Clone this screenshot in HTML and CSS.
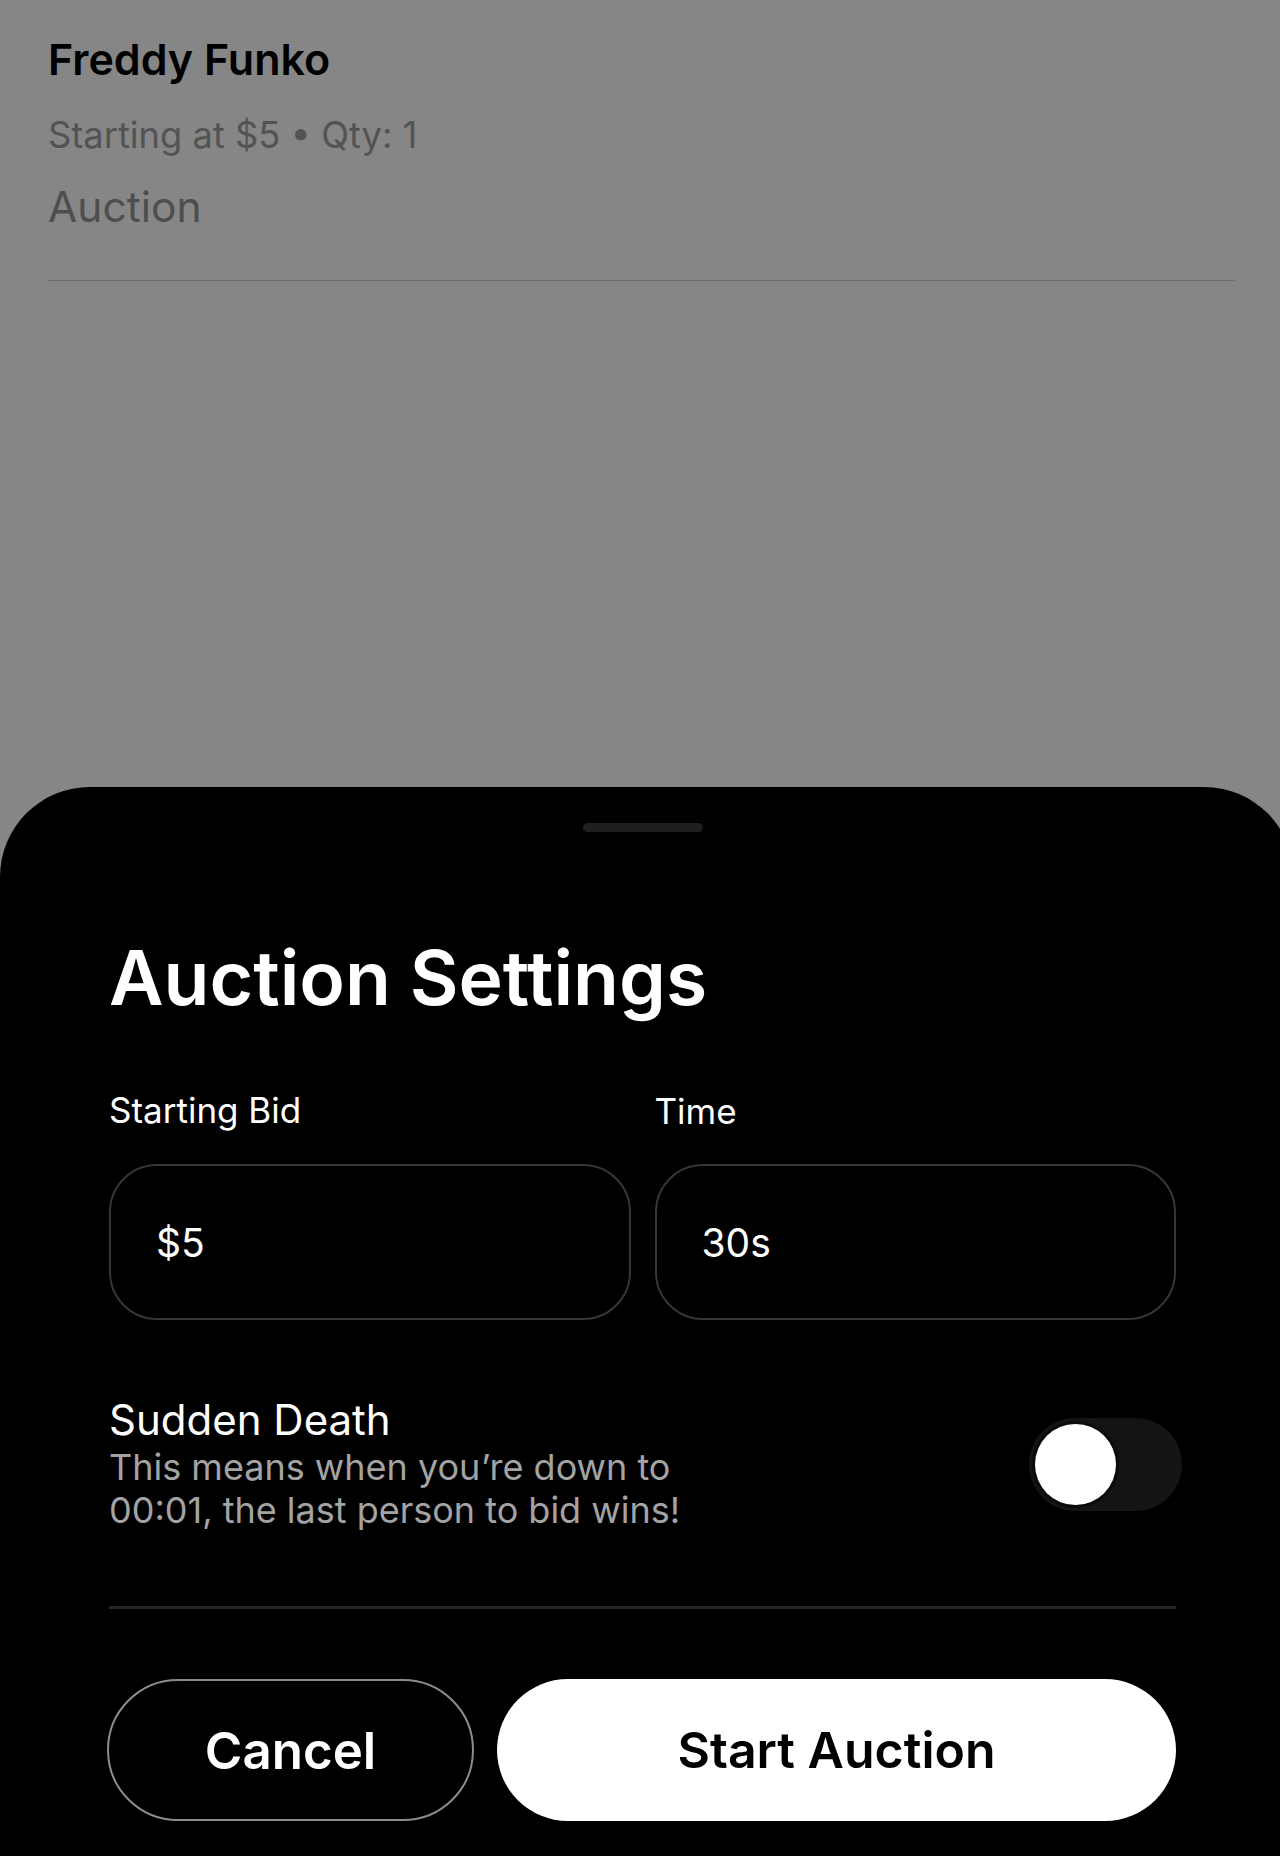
FILE: index.html
```html
<!DOCTYPE html>
<html lang="en">
<head>
    <meta charset="UTF-8">
    <meta name="viewport" content="width=device-width, initial-scale=1.0">
    <title>Auction Settings</title>
    <link rel="stylesheet" href="styles.css">
</head>
<body>
<div class="screen">

    <!-- Listing behind the sheet (dimmed) -->
    <div class="listing">
        <h2 class="listing-title">Freddy Funko</h2>
        <p class="listing-meta">Starting at $5 • Qty: 1</p>
        <p class="listing-type">Auction</p>
        <hr class="listing-divider">
    </div>

    <!-- Bottom sheet -->
    <div class="sheet">
        <div class="sheet-handle"></div>
        <h1 class="sheet-title">Auction Settings</h1>

        <div class="field-row">
            <div class="field">
                <div class="field-label">Starting Bid</div>
                <div class="field-input">$5</div>
            </div>
            <div class="field field-time">
                <div class="field-label">Time</div>
                <div class="field-input">30s</div>
            </div>
        </div>

        <div class="toggle-row">
            <div class="toggle-text">
                <div class="toggle-title">Sudden Death</div>
                <div class="toggle-desc">This means when you’re down to 00:01, the last person to bid wins!</div>
            </div>
            <div class="switch" onclick="this.classList.toggle('on')">
                <div class="switch-knob"></div>
            </div>
        </div>

        <hr class="sheet-divider">

        <div class="sheet-actions">
            <div class="button button-outline">Cancel</div>
            <div class="button button-solid">Start Auction</div>
        </div>
    </div>
</div>
</body>
</html>
```
FILE: styles.css
```css
/* Page + dimmed listing */
body {
    margin: 0;
    background-color: #868686; /* white page under the dark overlay */
    font-family: Inter, "Noto Sans", sans-serif;
    overflow: hidden;
}
.screen {
    min-height: 100vh;
    display: flex;
    flex-direction: column;
}
.listing {
    padding: 34px 45px 0 48px;
}
.listing-title {
    margin: 0;
    font-size: 43px;
    line-height: 50px;
    font-weight: 600;
    color: #000;
}
.listing-meta {
    margin: 29px 0 0;
    font-size: 36.3px;
    line-height: 44px;
    color: #535353;
}
.listing-type {
    margin: 25px 0 0;
    font-size: 42.5px;
    line-height: 50px;
    color: #4e4e4e;
}
.listing-divider {
    margin: 48px 0 0;
    border: 0;
    height: 1px;
    background-color: #6e6e6e;
}

/* Bottom sheet */
.sheet {
    margin-top: auto;
    margin-right: -14px; /* right corner runs a little past the screen edge */
    background-color: #000;
    border-radius: 90px 90px 0 0;
    padding: 36px 118px 35px 109px;
    display: flex;
    flex-direction: column;
    color: #fff;
}
.sheet-handle {
    align-self: center;
    width: 120px;
    height: 9px;
    border-radius: 5px;
    background-color: #1f1f1f;
}
.sheet-title {
    margin: 102px 0 0;
    font-size: 75px;
    line-height: 88px;
    font-weight: 600;
}

/* Inputs */
.field-row {
    margin-top: 67px;
    display: grid;
    grid-template-columns: 1fr 1fr;
    column-gap: 24px;
}
.field-label {
    font-size: 35px;
    line-height: 42px;
}
.field-time .field-label {
    padding-top: 2px;
    line-height: 40px;
}
.field-input {
    margin-top: 33px;
    height: 156px;
    box-sizing: border-box;
    border: 2px solid #363636;
    border-radius: 48px;
    padding-left: 45px;
    display: flex;
    align-items: center;
    font-size: 39px;
}

/* Sudden death toggle */
.toggle-row {
    margin-top: 76px;
    display: flex;
    align-items: center;
    justify-content: space-between;
}
.toggle-title {
    font-size: 42px;
    line-height: 48px;
}
.toggle-desc {
    margin-top: 2px;
    max-width: 600px;
    font-size: 36px;
    line-height: 43px;
    color: #a3a3a3;
}
.switch {
    width: 153px;
    height: 93px;
    box-sizing: border-box;
    margin-right: -6px;
    padding: 6px;
    border-radius: 47px;
    background-color: #141414;
    cursor: pointer;
}
.switch-knob {
    width: 81px;
    height: 81px;
    border-radius: 50%;
    background-color: #fff;
    box-shadow: 0 0 0 3px #0b0b0b;
}
.switch.on .switch-knob {
    margin-left: auto;
}

.sheet-divider {
    margin: 74px 0 0;
    border: 0;
    height: 3px;
    background-color: #262626;
}

/* Buttons */
.sheet-actions {
    margin-top: 70px;
    display: flex;
    gap: 23px;
}
.button {
    height: 142px;
    box-sizing: border-box;
    border-radius: 71px;
    display: flex;
    align-items: center;
    justify-content: center;
    font-size: 50px;
    font-weight: 600;
    cursor: pointer;
}
.button-outline {
    width: 367px;
    margin-left: -2px;
    border: 2.5px solid #8c8c8c;
    color: #fff;
    font-size: 51px;
}
.button-solid {
    flex: 1;
    background-color: #fff;
    color: #000;
}
```
